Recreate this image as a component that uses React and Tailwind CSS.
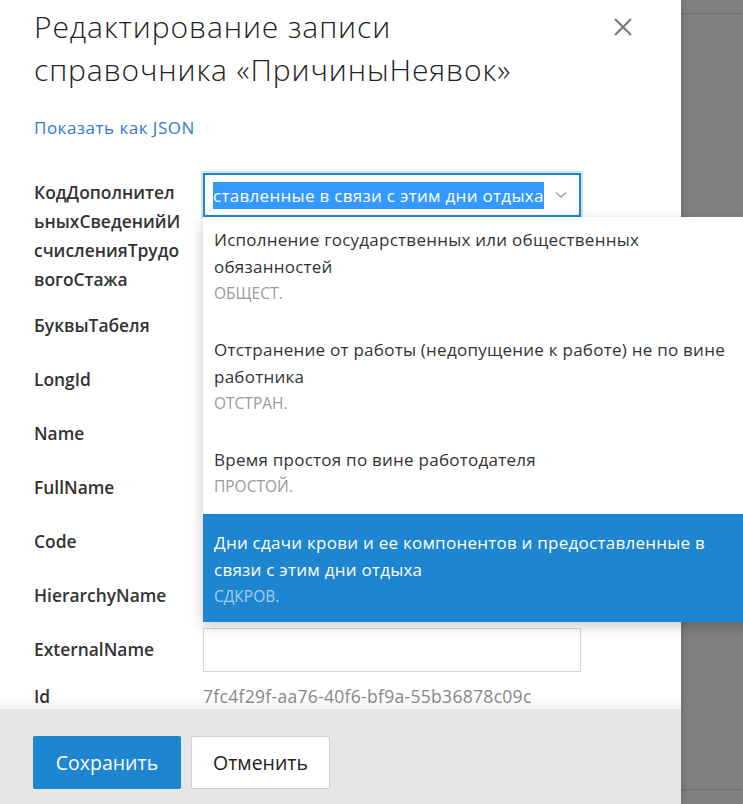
import React from "react";

const items = [
  { lines: ["Исполнение государственных или общественных", "обязанностей"], code: "ОБЩЕСТ." },
  { lines: ["Отстранение от работы (недопущение к работе) не по вине", "работника"], code: "ОТСТРАН." },
  { lines: ["Время простоя по вине работодателя"], code: "ПРОСТОЙ." },
  { lines: ["Дни сдачи крови и ее компонентов и предоставленные в", "связи с этим дни отдыха"], code: "СДКРОВ.", active: true },
];

const rows = ["БуквыТабеля", "LongId", "Name", "FullName", "Code", "HierarchyName"];

export default function App() {
  return (
    <div className="relative w-[743px] h-[804px] overflow-hidden bg-[#808080] font-['Open_Sans',sans-serif] text-[#333]">
      <div className="flex h-full">
        <div className="w-[681px] h-full bg-white flex flex-col shadow-[2px_0_8px_rgba(0,0,0,0.15)] z-10">
          <div className="relative flex-1 overflow-hidden pl-[34px] pr-[46px]">
            <div className="flex justify-between items-start pt-[5px]">
              <h1 className="text-[30px] leading-[43px] font-light text-[#222] tracking-[0.9px]">
                Редактирование записи
                <br />
                справочника «ПричиныНеявок»
              </h1>
              <button className="mt-[12px] mr-[2px] w-[20px] h-[20px] flex items-center justify-center">
                <svg width="18" height="18" viewBox="0 0 18 18">
                  <path d="M1 1L17 17M17 1L1 17" stroke="#777" strokeWidth="2" />
                </svg>
              </button>
            </div>
            <div className="mt-[25px] text-[17px] leading-[24px] text-[#2f7bd0] tracking-[0.5px]">Показать как JSON</div>

            <div className="mt-[33px] flex flex-col gap-[10px]">
              <div className="flex items-start">
                <div className="w-[169px] pt-[5px] text-[17.4px] leading-[29px] font-semibold text-[#333]">
                  КодДополнител
                  <br />
                  ьныхСведенийИ
                  <br />
                  счисленияТрудо
                  <br />
                  вогоСтажа
                </div>
                <div className="w-[378px] h-[44px] border-2 border-[#1f86d2] shadow-[0_0_0_2px_rgba(31,134,210,0.2)] flex items-center pl-[8px] pr-[12px]">
                  <div className="flex-1 overflow-hidden whitespace-nowrap">
                    <span className="bg-[#3399ff] text-white text-[17px] leading-[27px] tracking-[0.3px] inline-block">
                      ставленные в связи с этим дни отдыха
                    </span>
                  </div>
                  <svg width="12" height="8" viewBox="0 0 12 8" className="ml-[10px]">
                    <path d="M1 1.5L6 6L11 1.5" stroke="#a0a0a0" strokeWidth="1.5" fill="none" />
                  </svg>
                </div>
              </div>
              {rows.map((r) => (
                <div key={r} className="flex items-start h-[44px]">
                  <div className="w-[169px] pt-[7px] text-[17.4px] leading-[29px] font-semibold text-[#333]">{r}</div>
                  <div className="w-[378px] h-[44px] border border-[#d4d4d4]" />
                </div>
              ))}
              <div className="flex items-start h-[44px]">
                <div className="w-[169px] pt-[7px] text-[17.4px] leading-[29px] font-semibold text-[#333]">ExternalName</div>
                <div className="w-[378px] h-[44px] border border-[#d4d4d4]" />
              </div>
              <div className="flex items-start h-[30px]">
                <div className="w-[169px] text-[17.4px] leading-[29px] font-semibold text-[#333]">Id</div>
                <div className="text-[17.5px] leading-[29px] text-[#888] tracking-[0.3px]">7fc4f29f-aa76-40f6-bf9a-55b36878c09c</div>
              </div>
            </div>
            <div className="absolute left-0 right-0 bottom-0 h-[14px] bg-gradient-to-b from-transparent to-[rgba(0,0,0,0.05)]" />
          </div>
          <div className="h-[95px] bg-[#e6e6e6] flex items-start gap-[10px] pl-[33px] pt-[27px]">
            <button className="h-[53px] w-[148px] bg-[#1e85d0] text-white text-[19.5px] rounded-[2px]">Сохранить</button>
            <button className="h-[53px] w-[139px] bg-white text-[#222] text-[19.5px] rounded-[2px] border border-[#cfcfcf]">Отменить</button>
          </div>
        </div>
        <div className="flex-1 flex flex-col">
          <div className="h-[14px] border-b border-[#6e6e6e]" />
          <div className="flex-1 border-b border-[#707070]" />
          <div className="h-[14px]" />
        </div>
      </div>

      <div className="absolute left-[203px] top-[217px] w-[580px] h-[405px] overflow-hidden bg-white shadow-[0_4px_12px_rgba(0,0,0,0.22)] z-20">
        <div className="mt-[-6px]">
          {items.map((it, i) => (
            <div
              key={i}
              className={
                it.active
                  ? "pl-[11px] pr-[40px] pt-[15px] pb-[14px] bg-[#1e85d0] text-white"
                  : "pl-[11px] pr-[40px] pt-[15px] pb-[14px] text-[#333]"
              }
            >
              <div className="text-[17px] leading-[27px] tracking-[0.25px] whitespace-nowrap">
                {it.lines.map((l, j) => (
                  <div key={j}>{l}</div>
                ))}
              </div>
              <div className={it.active ? "text-[15.5px] leading-[27px] text-[#a7cdee]" : "text-[15.5px] leading-[27px] text-[#999]"}>
                {it.code}
              </div>
            </div>
          ))}
        </div>
      </div>
    </div>
  );
}
